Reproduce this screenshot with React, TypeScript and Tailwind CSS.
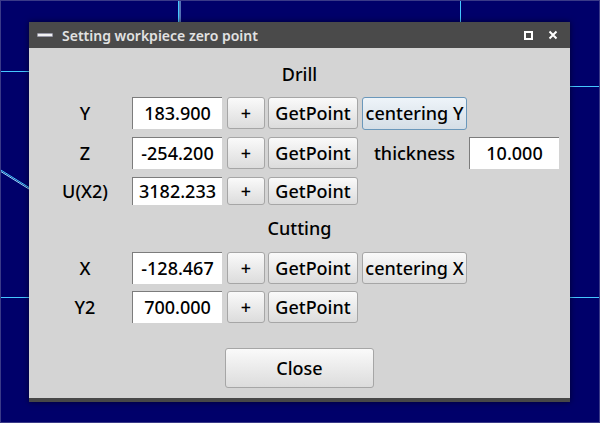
const font = { fontFamily: '"Noto Sans", "Liberation Sans", sans-serif' };

const btn =
  "flex items-center justify-center rounded-[3px] border border-[#a6a6a6] bg-gradient-to-b from-[#fafafa] to-[#dcdcdc] text-[18px] font-medium text-black";

function Field({ value, h = "h-[32px]" }: { value: string; h?: string }) {
  return (
    <div
      className={`ml-[2px] flex w-[90px] items-center justify-center border-t border-l border-[#7c7c7c] bg-white text-[18px] font-medium text-black ${h}`}
    >
      {value}
    </div>
  );
}

function Row({
  label,
  value,
  extra,
  h = "h-[32px]",
  mt,
}: {
  label: string;
  value: string;
  extra?: React.ReactNode;
  h?: string;
  mt: string;
}) {
  return (
    <div className={`flex items-center pl-[11px] ${mt} ${h}`}>
      <div className="w-[90px] text-center text-[18px] font-medium text-black">{label}</div>
      <Field value={value} h={h} />
      <button className={`${btn} ml-[5px] w-[38px] ${h}`}>+</button>
      <button className={`${btn} ml-[3px] w-[90px] ${h}`}>GetPoint</button>
      {extra}
    </div>
  );
}

export default function App() {
  return (
    <div
      className="relative h-[423px] w-[600px] overflow-hidden border border-[#3a3a88] bg-[#00006a]"
      style={font}
    >
      {/* background drawing lines */}
      <svg className="absolute left-[-1px] top-[-1px]" width="600" height="423">
        <line x1="178.5" y1="0" x2="178.5" y2="22" stroke="#45c8ff" strokeWidth="1" />
        <line x1="180" y1="0" x2="180" y2="22" stroke="#a8e4ff" strokeWidth="1" />
        <line x1="460.5" y1="0" x2="460.5" y2="22" stroke="#45c8ff" strokeWidth="1" />
        <line x1="0" y1="71.5" x2="29" y2="71.5" stroke="#45c8ff" strokeWidth="1" />
        <line x1="570" y1="86.5" x2="600" y2="86.5" stroke="#45c8ff" strokeWidth="1" />
        <line x1="0" y1="297.5" x2="29" y2="297.5" stroke="#45c8ff" strokeWidth="1" />
        <line x1="570" y1="297.5" x2="600" y2="297.5" stroke="#45c8ff" strokeWidth="1" />
        <line x1="0" y1="169.5" x2="29" y2="187.5" stroke="#45c8ff" strokeWidth="1" />
        <line x1="0" y1="171" x2="29" y2="189" stroke="#9fe0ff" strokeWidth="1" />
      </svg>

      <div className="relative ml-[28px] mt-[21px] w-[541px] shadow-[0_0_6px_rgba(0,0,0,0.55)]">
        {/* title bar */}
        <div className="flex h-[26px] items-center bg-[#4a4a4a] pl-[8px] pr-[12px]">
          <div className="h-[4px] w-[16px] rounded-[1px] border border-[#9a9aa8] bg-[#f2f2f2]" />
          <div className="ml-[9px] flex-1 text-[14px] font-semibold text-[#e2e2e2]">
            Setting workpiece zero point
          </div>
          <svg width="9" height="9" viewBox="0 0 9 9" className="mr-[15px]">
            <rect x="1" y="1" width="7" height="7" fill="none" stroke="#fff" strokeWidth="2" />
          </svg>
          <svg width="10" height="10" viewBox="0 0 10 10">
            <path d="M1.5 1.5 L8.5 8.5 M8.5 1.5 L1.5 8.5" stroke="#fff" strokeWidth="2" />
          </svg>
        </div>

        {/* content */}
        <div className="flex h-[350px] flex-col bg-[#d4d4d4] pt-[14px]">
          <div className="h-[24px] text-center text-[18px] font-medium leading-[24px] text-black">Drill</div>
          <Row
            label="Y"
            value="183.900"
            mt="mt-[11px]"
            extra={
              <button className="ml-[4px] flex h-[33px] w-[105px] items-center justify-center rounded-[3px] border border-[#6b98bb] bg-gradient-to-b from-[#eef4f9] to-[#d5dee6] text-[18px] font-medium text-black">
                centering Y
              </button>
            }
          />
          <Row
            label="Z"
            value="-254.200"
            mt="mt-[8px]"
            extra={
              <>
                <div className="ml-[4px] w-[105px] text-center text-[18px] font-medium text-black">thickness</div>
                <Field value="10.000" />
              </>
            }
          />
          <Row label="U(X2)" value="3182.233" mt="mt-[8px]" h="h-[28px]" />
          <div className="mt-[11px] h-[24px] text-center text-[18px] font-medium leading-[24px] text-black">
            Cutting
          </div>
          <Row
            label="X"
            value="-128.467"
            mt="mt-[12px]"
            extra={<button className={`${btn} ml-[4px] h-[32px] w-[105px]`}>centering X</button>}
          />
          <Row label="Y2" value="700.000" mt="mt-[7px]" />
          <div className="mt-[25px] flex justify-center">
            <button className={`${btn} h-[40px] w-[149px]`}>Close</button>
          </div>
        </div>
        <div className="h-[4px] bg-[#474747]" />
      </div>
    </div>
  );
}
